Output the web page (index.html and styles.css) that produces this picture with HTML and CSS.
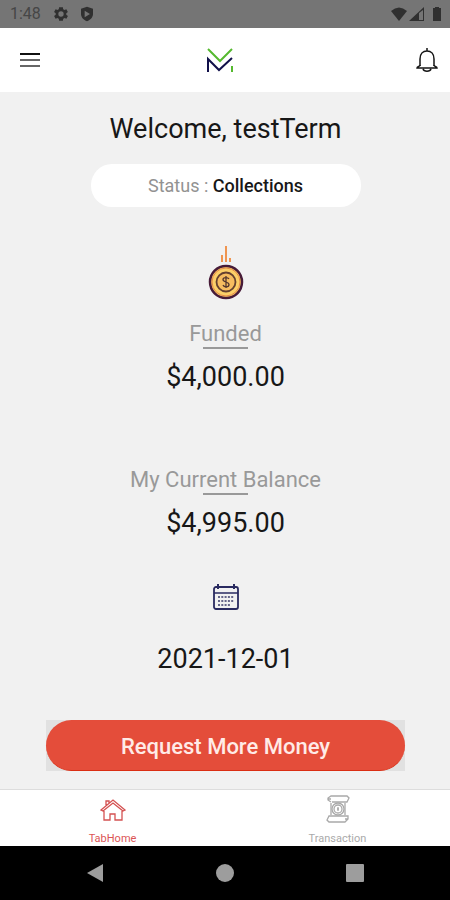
FILE: index.html
```html
<!DOCTYPE html>
<html lang="en">
<head>
<meta charset="utf-8">
<meta name="viewport" content="width=device-width, initial-scale=1">
<title>Home</title>
<link rel="stylesheet" href="styles.css">
</head>
<body>
<div class="status-bar">
  <span class="clock">1:48</span>
  <svg class="gear" width="16" height="16" viewBox="2 2 21 20" aria-hidden="true"><path fill-rule="evenodd" d="M19.4 13a7.500 7.500 0 0 0 0-2l2.100-1.600-2-3.500-2.500 1a7.500 7.500 0 0 0-1.700-1L15 3.200h-5l-.4 2.700a7.500 7.500 0 0 0-1.700 1l-2.500-1-2 3.500L5.600 11a7.500 7.500 0 0 0 0 2l-2.200 1.600 2 3.500 2.500-1a7.500 7.500 0 0 0 1.700 1l.4 2.700h5l.4-2.700a7.500 7.500 0 0 0 1.700-1l2.500 1 2-3.500zM12.500 15.500a3.500 3.500 0 1 1 0-7 3.500 3.500 0 0 1 0 7z"/></svg>
  <svg class="shield" width="16" height="16" viewBox="0 0 24 24" aria-hidden="true"><path fill-rule="evenodd" d="M12 1 3 4v8c0 5 4 9 9 11 5-2 9-6 9-11V4zM8.500 7v10l8-5z"/></svg>
  <svg class="signals" width="52" height="16" viewBox="0 0 52 16" aria-hidden="true">
    <path d="M0 5Q8-2 16 5L8 15z"/>
    <path fill-rule="evenodd" d="M33 1v14H18zM28 7v7h4V4z"/>
    <path d="M42 2h2V1h4v1h2v13h-8z"/>
  </svg>
</div>
<header class="app-bar">
  <button class="icon-button" type="button" aria-label="Menu">
    <svg width="22" height="16" viewBox="0 0 22 16"><path d="M1 2h20" stroke="#111" stroke-width="2"/><path d="M1 8h20M1 14h20" stroke="#666" stroke-width="2"/></svg>
  </button>
  <svg class="logo" width="28" height="26" viewBox="0 0 28 26" role="img" aria-label="Company logo" fill="none" stroke-width="2">
    <path d="M2 2 14 14 26 2M26 19v6" stroke="#55b92f"/>
    <path d="M2 25V12l11 11L26 11" stroke="#11104a"/>
  </svg>
  <button class="icon-button" type="button" aria-label="Notifications">
    <svg width="22" height="26" viewBox="0 0 22 26" fill="none" stroke="#151515" stroke-width="1.500"><path d="M11 1v3M4 19v-7c0-5 3-8 7-8s7 3 7 8v7"/><path d="M4 18c0 2-3 1-3 3h20c0-2-3-1-3-3M7 22c1 3 7 3 8 0"/></svg>
  </button>
</header>
<main class="content">
  <h1 class="figure">Welcome, testTerm</h1>
  <p class="status-pill">Status : <strong>Collections</strong></p>
  <svg class="coin" width="36" height="56" viewBox="0 0 36 56" aria-hidden="true">
    <path d="M14 10v7M18 1v16M22 13v4" stroke="#ef9551" stroke-width="2" fill="none"/>
    <circle cx="18" cy="37" r="16" fill="#fbcf68" stroke="#471b38" stroke-width="2.500"/>
    <circle cx="18" cy="37" r="14" fill="none" stroke="#e58a49"/>
    <circle cx="18" cy="37" r="9.500" fill="#f6bc60" stroke="#65402f" stroke-width="1.800"/>
    <path d="M21 34c-1-2-6-2-6 .5 0 3 6 2 6 5 0 3-5 3-6 .5M18 31v12" fill="none" stroke="#54362d" stroke-width="1.300"/>
  </svg>
  <section class="amount">
    <h2>Funded</h2>
    <p class="figure">$4,000.00</p>
  </section>
  <section class="amount balance">
    <h2>My Current Balance</h2>
    <p class="figure">$4,995.00</p>
  </section>
  <svg class="calendar" width="26" height="26" viewBox="0 0 26 26" fill="none" stroke="#292a60" aria-hidden="true">
    <rect x="1" y="3" width="24" height="22" rx="2" stroke-width="1.800"/>
    <path d="M1 9h24" stroke-width="1.500"/><path d="M4 3h18" stroke-width="2"/><path d="M5 0v5M21 0v5" stroke-width="2"/>
    <path d="M5 13h16M5 17h16M5 21h13" stroke="#66668a" stroke-width="2" stroke-dasharray="2 1.300"/>
  </svg>
  <p class="figure date">2021-12-01</p>
  <div class="action"><button type="button">Request More Money</button></div>
</main>
<nav class="tabs" aria-label="Main">
  <a class="active" href="#home">
    <svg width="26" height="28" viewBox="0 -4 26 28" fill="none" stroke="#d45151" stroke-width="1.300"><path d="M1 11 13 1l12 10-2 1L13 4 3 12zM4 12v9h6v-6h5v6h7v-9M6 7V2h3v2"/></svg>
    TabHome
  </a>
  <a href="#transaction">
    <svg width="26" height="28" viewBox="0 0 26 28" fill="none" stroke="#a9a9a9" stroke-width="1.300"><path d="M6 7 3 5V3l3-2h16l2 2-2 4H7M3 4h3M20 21h3v3l-3 3H4l-2-2 2-4h16M23 24h-3"/><circle cx="13" cy="14" r="6"/><circle cx="13" cy="14" r="4"/><path d="M13 12v4M12 14h2M6 8v12M20 8v12"/></svg>
    Transaction
  </a>
</nav>
<div class="system-nav">
  <button type="button" aria-label="Back"><svg width="20" height="20" viewBox="0 0 20 20"><path d="M2 10 18 1v18z"/></svg></button>
  <button type="button" aria-label="Home"><svg width="20" height="20" viewBox="0 0 20 20"><circle cx="10" cy="10" r="9"/></svg></button>
  <button type="button" aria-label="Recent apps"><svg width="20" height="20" viewBox="0 0 20 20"><rect x="1" y="1" width="18" height="18" rx="1"/></svg></button>
</div>
</body>
</html>
```
FILE: styles.css
```css
* { box-sizing: border-box; }
body {
  margin: 0;
  min-height: 100vh;
  display: flex;
  flex-direction: column;
  background: #f1f1f1;
  color: #171717;
  font-family: Roboto, sans-serif;
}
h1, h2, p { margin: 0; font-weight: 400; }
button { border: 0; padding: 0; background: none; font-family: inherit; }
svg { display: block; flex: none; }
.status-bar {
  height: 28px;
  display: flex;
  align-items: center;
  padding: 0 7px 0 10px;
  background: #757575;
  fill: #303030;
}
.clock { width: 43px; color: #464646; font-size: 16px; line-height: 28px; }
.shield { margin-left: 10px; }
.signals { margin-left: auto; }
.app-bar {
  height: 64px;
  display: grid;
  grid-template-columns: 1fr auto 1fr;
  align-items: center;
  padding: 0 12px 0 19px;
  background: #fff;
}
.icon-button { justify-self: start; }
.icon-button:last-child { justify-self: end; }
.logo { margin-right: 18px; }
.content {
  flex: 1;
  display: flex;
  flex-direction: column;
  align-items: center;
  padding: 20px 45px 18px 46px;
}
.figure { font-size: 27px; line-height: 34px; }
.status-pill {
  width: 270px;
  max-width: 100%;
  margin-top: 18px;
  border-radius: 21px;
  background: #fff;
  color: #929292;
  font-size: 18px;
  line-height: 43px;
  text-align: center;
}
.status-pill strong { color: #171717; font-weight: 500; }
.coin { margin-top: 38px; }
.amount { margin-top: 19px; text-align: center; }
.amount h2 { color: #999; font-size: 22px; line-height: 27px; }
.amount h2::after {
  content: "";
  display: block;
  width: 45px;
  height: 2px;
  margin: 0 auto;
  background: #999;
}
.amount .figure { margin-top: 11px; }
.balance { margin-top: 72px; }
.calendar { margin-top: 44px; }
.date { margin-top: 32px; }
.action { width: 100%; margin-top: auto; background: #e1e1e1; }
.action button {
  display: block;
  width: 100%;
  padding: 13px 0 9px;
  border-bottom: 1px solid #da2d13;
  border-radius: 26px;
  background: #e44d3a;
  color: #ffebe7;
  font-size: 22px;
  font-weight: 500;
  line-height: 28px;
}
.tabs {
  height: 57px;
  display: grid;
  grid-template-columns: 1fr 1fr;
  border-top: 1px solid #ddd;
  background: #fff;
}
.tabs a {
  display: flex;
  flex-direction: column;
  align-items: center;
  justify-content: space-between;
  padding-top: 5px;
  color: #aaa;
  font-size: 11px;
  line-height: 14px;
  text-decoration: none;
}
.tabs .active { color: #dc5555; }
.system-nav {
  height: 54px;
  display: flex;
  align-items: center;
  justify-content: space-between;
  padding: 0 85px;
  background: #000;
  fill: #9d9d9d;
}
```
